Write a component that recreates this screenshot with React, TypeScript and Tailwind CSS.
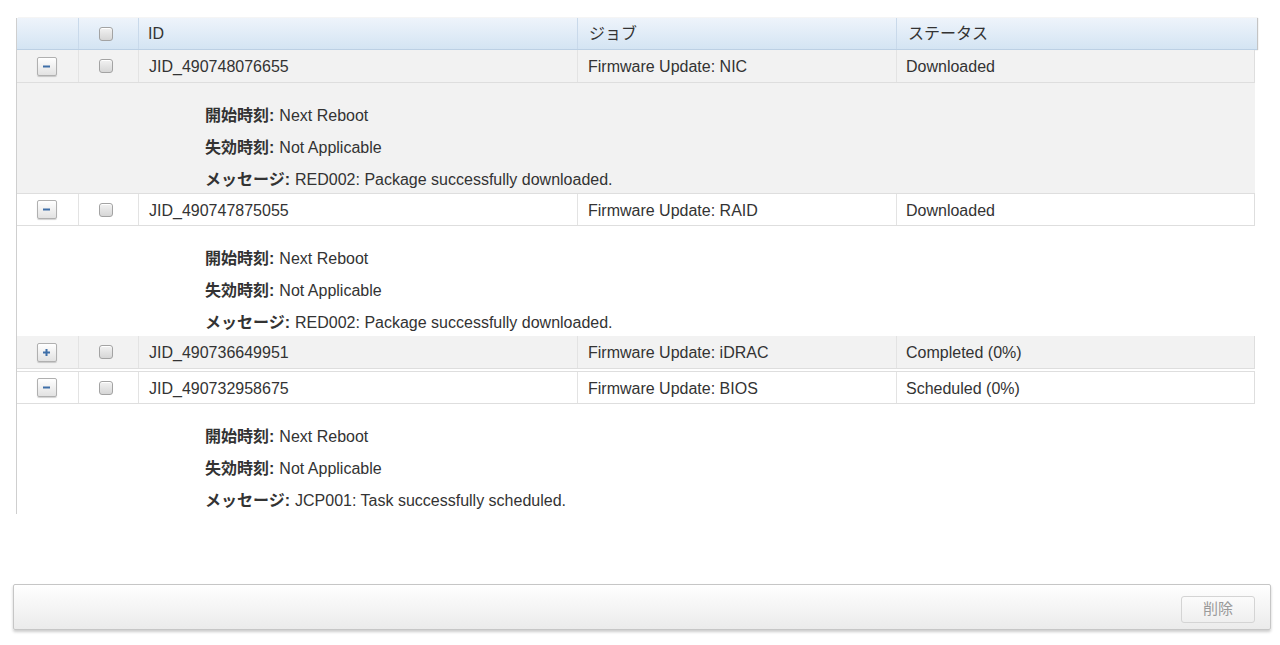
import React, { useState } from 'react';

type Job = {
  id: string;
  name: string;
  status: string;
  start: string;
  expires: string;
  message: string;
};

const JOBS: Job[] = [
  { id: 'JID_490748076655', name: 'Firmware Update: NIC', status: 'Downloaded', start: 'Next Reboot', expires: 'Not Applicable', message: 'RED002: Package successfully downloaded.' },
  { id: 'JID_490747875055', name: 'Firmware Update: RAID', status: 'Downloaded', start: 'Next Reboot', expires: 'Not Applicable', message: 'RED002: Package successfully downloaded.' },
  { id: 'JID_490736649951', name: 'Firmware Update: iDRAC', status: 'Completed (0%)', start: 'Next Reboot', expires: 'Not Applicable', message: 'RED001: Job completed successfully.' },
  { id: 'JID_490732958675', name: 'Firmware Update: BIOS', status: 'Scheduled (0%)', start: 'Next Reboot', expires: 'Not Applicable', message: 'JCP001: Task successfully scheduled.' },
];

const FONT = 'font-["Liberation_Sans","Noto_Sans_CJK_JP",sans-serif]';
const COLS = 'grid grid-cols-[62px_60px_439px_319px_1fr]';

const Checkbox = () => (
  <span className="inline-block w-[14px] h-[14px] rounded-[3px] border border-[#a3a3a3] bg-gradient-to-b from-[#f2f2f2] to-[#d6d6d6] shadow-[inset_0_1px_0_#fff]" />
);

const ToggleButton = ({ open, onClick }: { open: boolean; onClick: () => void }) => (
  <button
    onClick={onClick}
    className="w-[20px] h-[19px] flex items-center justify-center rounded-[2px] border border-[#b0b0b0] bg-gradient-to-b from-[#ffffff] to-[#e2e2e2] shadow-[0_1px_1px_rgba(0,0,0,0.18)]"
  >
    <svg width="9" height="9" viewBox="0 0 9 9">
      <rect x="1" y="3.5" width="7" height="2" fill="#3f6fa8" />
      {!open && <rect x="3.5" y="1" width="2" height="7" fill="#3f6fa8" />}
    </svg>
  </button>
);

const DetailLine = ({ label, value }: { label: string; value: string }) => (
  <div className="h-[32px] flex items-center">
    <span className="font-bold">{label}:</span>
    <span className="ml-[5px]">{value}</span>
  </div>
);

export default function App() {
  const [open, setOpen] = useState<boolean[]>([true, true, false, true]);

  const toggle = (i: number) => {
    setOpen(open.map((v, j) => (j === i ? !v : v)));
  };

  return (
    <div className={`${FONT} text-[16px] text-[#333] bg-white w-[1280px] h-[645px] overflow-hidden`}>
      <div className="pt-[18px] pl-[16px]">
        <div className="w-[1242px] border-l border-[#cfcfcf]">
          {/* header */}
          <div className={`${COLS} h-[32px] w-[1240px] bg-gradient-to-b from-[#eef4fb] to-[#d4e4f3] border-b border-[#bcd0e4] shadow-[1px_0_1px_#c4c4c4]`}>
            <div className="border-r border-[#c9d9ea]" />
            <div className="border-r border-[#c9d9ea] flex items-center justify-center pr-[5px]">
              <Checkbox />
            </div>
            <div className="border-r border-[#c9d9ea] flex items-center pl-[9px]">ID</div>
            <div className="border-r border-[#c9d9ea] flex items-center pl-[11px]">ジョブ</div>
            <div className="flex items-center pl-[11px]">ステータス</div>
          </div>

          {JOBS.map((job, i) => {
            const shaded = i % 2 === 0;
            const rowBg = shaded ? 'bg-[#f2f2f2]' : 'bg-white';
            return (
              <div key={job.id} className={i === 3 ? 'mt-[2px]' : ''}>
                <div className={`${COLS} h-[33px] w-[1238px] ${rowBg} border-b border-r border-[#dedede] ${!shaded ? 'border-t' : ''}`}>
                  <div className="border-r border-[#e3e3e3] flex items-center justify-center pr-[2px]">
                    <ToggleButton open={open[i]} onClick={() => toggle(i)} />
                  </div>
                  <div className="border-r border-[#e3e3e3] flex items-center justify-center pr-[5px]">
                    <Checkbox />
                  </div>
                  <div className="border-r border-[#e3e3e3] flex items-center pl-[10px] pt-[2px]">{job.id}</div>
                  <div className="border-r border-[#e3e3e3] flex items-center pl-[10px] pt-[2px]">{job.name}</div>
                  <div className="flex items-center pl-[9px] pt-[2px]">{job.status}</div>
                </div>
                {open[i] && (
                  <div className={`${rowBg} w-[1238px] h-[110px] pt-[17px] pl-[188px]`}>
                    <DetailLine label="開始時刻" value={job.start} />
                    <DetailLine label="失効時刻" value={job.expires} />
                    <DetailLine label="メッセージ" value={job.message} />
                  </div>
                )}
              </div>
            );
          })}
        </div>
      </div>

      {/* action bar */}
      <div className="mt-[70px] ml-[13px] w-[1258px] h-[46px] border border-[#c6c6c6] rounded-[2px] bg-gradient-to-b from-[#ffffff] to-[#ebebeb] shadow-[0_2px_3px_rgba(0,0,0,0.2)] flex items-center justify-end pr-[15px]">
        <button
          disabled
          className="w-[74px] h-[27px] mt-[5px] rounded-[3px] border border-[#d4d4d4] bg-gradient-to-b from-[#fbfbfb] to-[#efefef] text-[15px] text-[#9a9a9a]"
        >
          削除
        </button>
      </div>
    </div>
  );
}
